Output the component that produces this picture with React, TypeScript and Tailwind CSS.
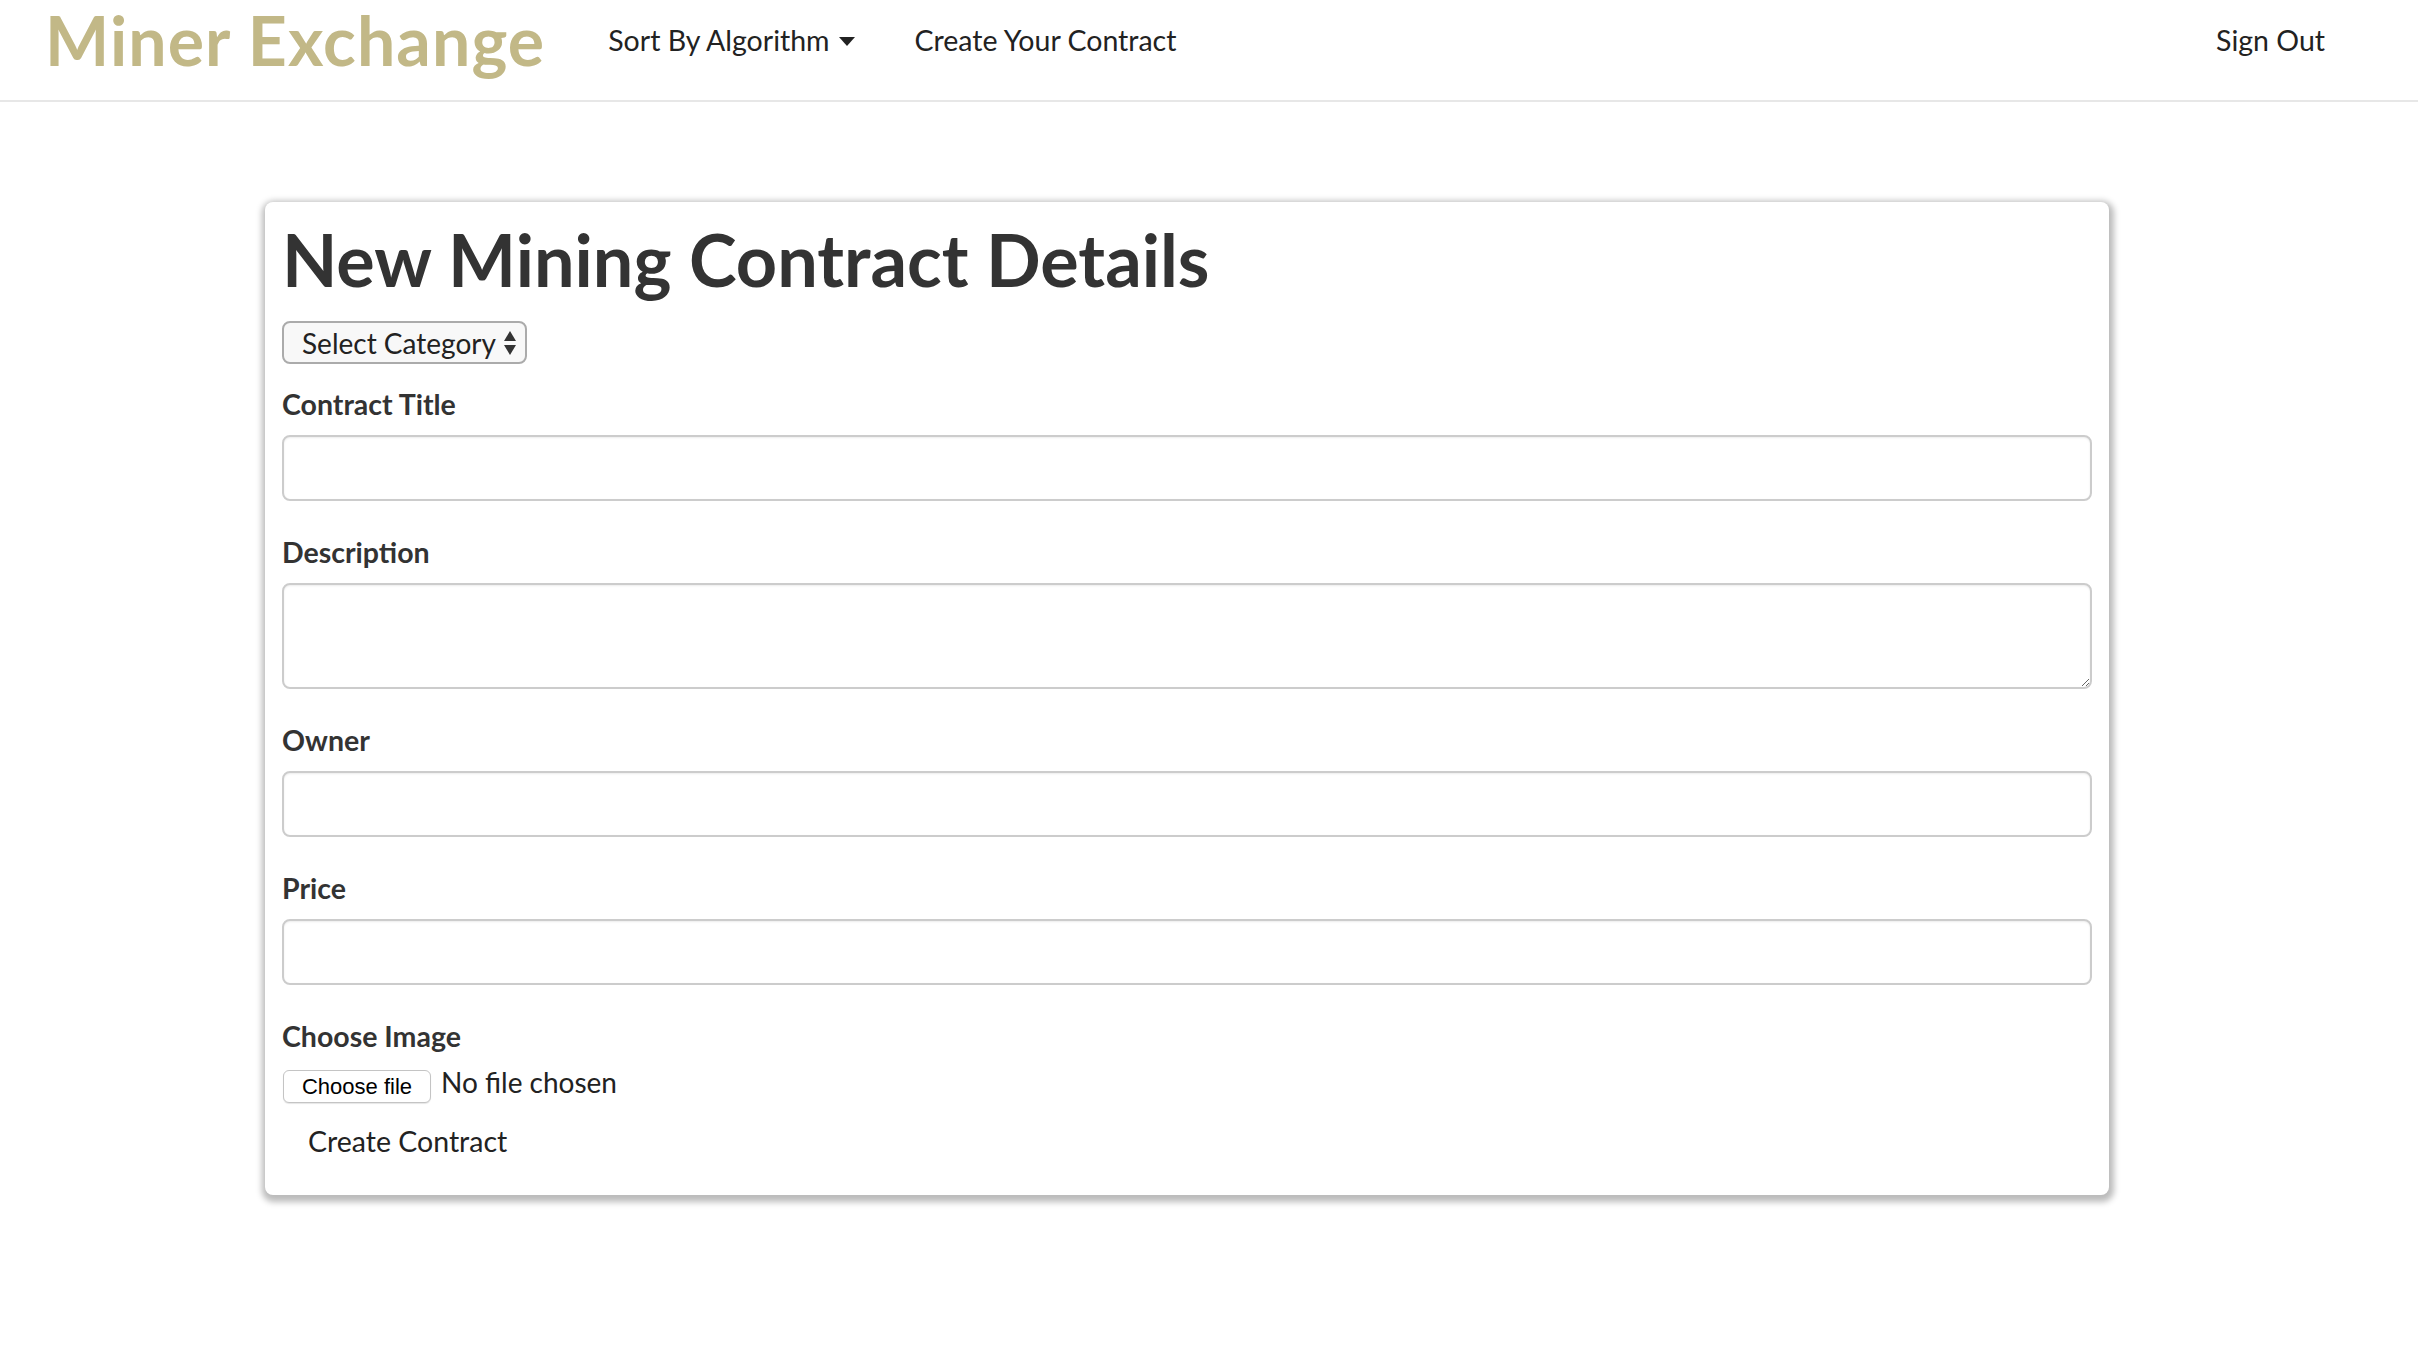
import React from "react";

const fields = [
  { label: "Contract Title", kind: "input" },
  { label: "Description", kind: "textarea" },
  { label: "Owner", kind: "input" },
  { label: "Price", kind: "input" },
];

function Caret() {
  return (
    <svg width="16" height="9" viewBox="0 0 16 9" className="ml-[9px] mt-[2px]">
      <path d="M0 0h16L8 9z" fill="#222" />
    </svg>
  );
}

function SelectArrows() {
  return (
    <svg width="14" height="26" viewBox="0 0 14 26">
      <path d="M7 1L13 11H1z" fill="#333" />
      <path d="M7 25L13 15H1z" fill="#333" />
    </svg>
  );
}

function Navbar() {
  return (
    <nav className="h-[102px] border-b-2 border-[#e7e7e7] bg-white">
      <div className="h-[80px] flex items-center pl-[45px] pr-[93px]">
        <a className="text-[68px] font-bold leading-none text-[#c2b887] tracking-[1.1px]">
          Miner Exchange
        </a>
        <div className="flex items-center ml-[63px] text-[28.5px] text-[#222]">
          <span className="flex items-center">
            Sort By Algorithm
            <Caret />
          </span>
          <span className="ml-[60px]">Create Your Contract</span>
        </div>
        <span className="ml-auto text-[28.5px] text-[#222]">Sign Out</span>
      </div>
    </nav>
  );
}

function Field({ label, kind }: { label: string; kind: string }) {
  return (
    <div className="mt-[20px] [&+&]:mt-[31px]">
      <label className="block text-[28.5px] leading-[40px] font-bold text-[#333] mb-[11px]">
        {label}
      </label>
      {kind === "textarea" ? (
        <textarea className="block w-full h-[106px] border-2 border-[#cccccc] rounded-[8px] shadow-[inset_0_1px_2px_rgba(0,0,0,0.08)] outline-none" />
      ) : (
        <input className="block w-full h-[66px] border-2 border-[#cccccc] rounded-[8px] shadow-[inset_0_1px_2px_rgba(0,0,0,0.08)] outline-none" />
      )}
    </div>
  );
}

export default function App() {
  return (
    <div className="min-h-[1346px] bg-white font-['Lato','Noto_Sans',sans-serif] text-[#333]">
      <Navbar />
      <main className="pt-[100px]">
        <div className="ml-[265px] w-[1844px] rounded-[8px] bg-white shadow-[1px_3px_6px_4px_rgba(0,0,0,0.27)] px-[17px] pt-[17px] pb-[22px]">
          <h1 className="text-[72px] font-bold leading-[81px] text-[#333] mb-[21px]">
            New Mining Contract Details
          </h1>
          <div className="w-[245px] h-[43px] flex items-center justify-between pl-[18px] pr-[8px] border-2 border-[#ababab] rounded-[8px] bg-[#f8f8f8] text-[28px] text-[#222]">
            <span>Select Category</span>
            <SelectArrows />
          </div>
          {fields.map((f) => (
            <Field key={f.label} label={f.label} kind={f.kind} />
          ))}
          <div className="mt-[31px]">
            <label className="block text-[28.5px] leading-[40px] font-bold text-[#333]">
              Choose Image
            </label>
            <div className="flex items-start mt-[10px]">
              <button className="mt-[4px] ml-[1px] w-[148px] h-[33px] border border-[#c4c4c4] rounded-[6px] bg-white shadow-[0_1px_1px_rgba(0,0,0,0.1)] font-['Liberation_Sans',sans-serif] text-[22px] leading-none text-black">
                Choose file
              </button>
              <span className="ml-[10px] text-[28px] leading-[32px] text-[#222]">No file chosen</span>
            </div>
            <button className="mt-[6px] px-[26px] py-[12px] text-[28.5px] leading-[40px] text-[#222]">
              Create Contract
            </button>
          </div>
        </div>
      </main>
    </div>
  );
}
